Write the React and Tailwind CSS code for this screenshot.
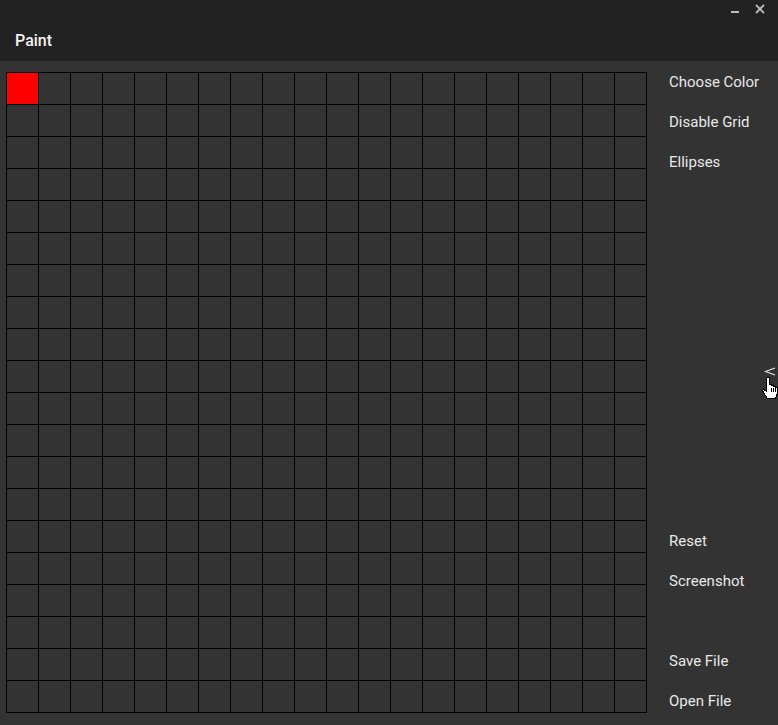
import React from 'react';

const ROWS = 20;
const COLS = 20;

const topItems = ['Choose Color', 'Disable Grid', 'Ellipses'];
const bottomItems = ['Reset', 'Screenshot', null, 'Save File', 'Open File'];

const MenuItem = ({ label }) => (
  <div className="h-10 flex items-center text-[15px] text-[#e8e8e8] whitespace-nowrap">
    {label}
  </div>
);

const HandCursor = () => (
  <svg width="17" height="23" viewBox="0 0 17 23" className="block">
    <path
      d="M5.5 0.5 L7.5 0.5 L7.5 7.5 L9.5 7.5 L9.5 8.5 L11.5 8.5 L11.5 9.5 L13.5 9.5 L13.5 10.5 L15.5 10.5 L15.5 16.5 L14.5 18.5 L13.5 21.5 L5.5 21.5 L1.5 15.5 L0.5 13.5 L1.5 12.5 L3.5 13.5 L4.5 14.5 L4.5 1.5 Z"
      fill="#fff"
      stroke="#000"
      strokeWidth="1"
      shapeRendering="crispEdges"
    />
    <path d="M9.5 11 V15 M11.5 11 V15 M13.5 11 V15" stroke="#000" strokeWidth="1" shapeRendering="crispEdges" />
  </svg>
);

const App = () => {
  const cells = [];
  for (let r = 0; r < ROWS; r++) {
    for (let c = 0; c < COLS; c++) {
      const painted = r === 0 && c === 0;
      cells.push(
        <div
          key={`${r}-${c}`}
          className={`w-8 h-8 border-r border-b border-black ${painted ? 'bg-[#ff0000]' : 'bg-[#333333]'}`}
        />
      );
    }
  }

  return (
    <div className="w-[778px] h-[725px] bg-[#333333] flex flex-col overflow-hidden relative" style={{ fontFamily: 'Roboto, "Liberation Sans", sans-serif' }}>
      {/* title bar */}
      <div className="h-[61px] bg-[#222222] relative shrink-0">
        <div className="pt-[29px] pl-[15px] text-[16px] font-medium text-[#f2f2f2]">Paint</div>
        <div className="absolute top-[4px] right-[13px] flex items-start gap-4">
          <div className="w-2 h-[2px] bg-[#bdbdbd] mt-[7px]" />
          <svg width="10" height="10" viewBox="0 0 10 10">
            <path d="M1 1 L9 9 M9 1 L1 9" stroke="#bdbdbd" strokeWidth="1.8" />
          </svg>
        </div>
      </div>

      {/* body */}
      <div className="flex flex-1">
        <div className="ml-[6px] mt-[11px]">
          <div className="grid grid-cols-[repeat(20,32px)] border-l border-t border-black w-[641px]">
            {cells}
          </div>
        </div>

        <div className="ml-[22px] mt-[1px] mb-[4px] flex flex-col justify-between flex-1">
          <div>
            {topItems.map((l) => <MenuItem key={l} label={l} />)}
          </div>
          <div>
            {bottomItems.map((l, i) => <MenuItem key={i} label={l} />)}
          </div>
        </div>
      </div>

      {/* collapse toggle + cursor */}
      <div className="absolute top-[367px] left-[764px]">
        <svg width="12" height="9" viewBox="0 0 12 9" className="block">
          <path d="M11 1 L1.5 4.5 L11 8" fill="none" stroke="#e8e8e8" strokeWidth="1.2" />
        </svg>
      </div>
      <div className="absolute top-[377px] left-[762px]">
        <HandCursor />
      </div>
    </div>
  );
};

export default App;
